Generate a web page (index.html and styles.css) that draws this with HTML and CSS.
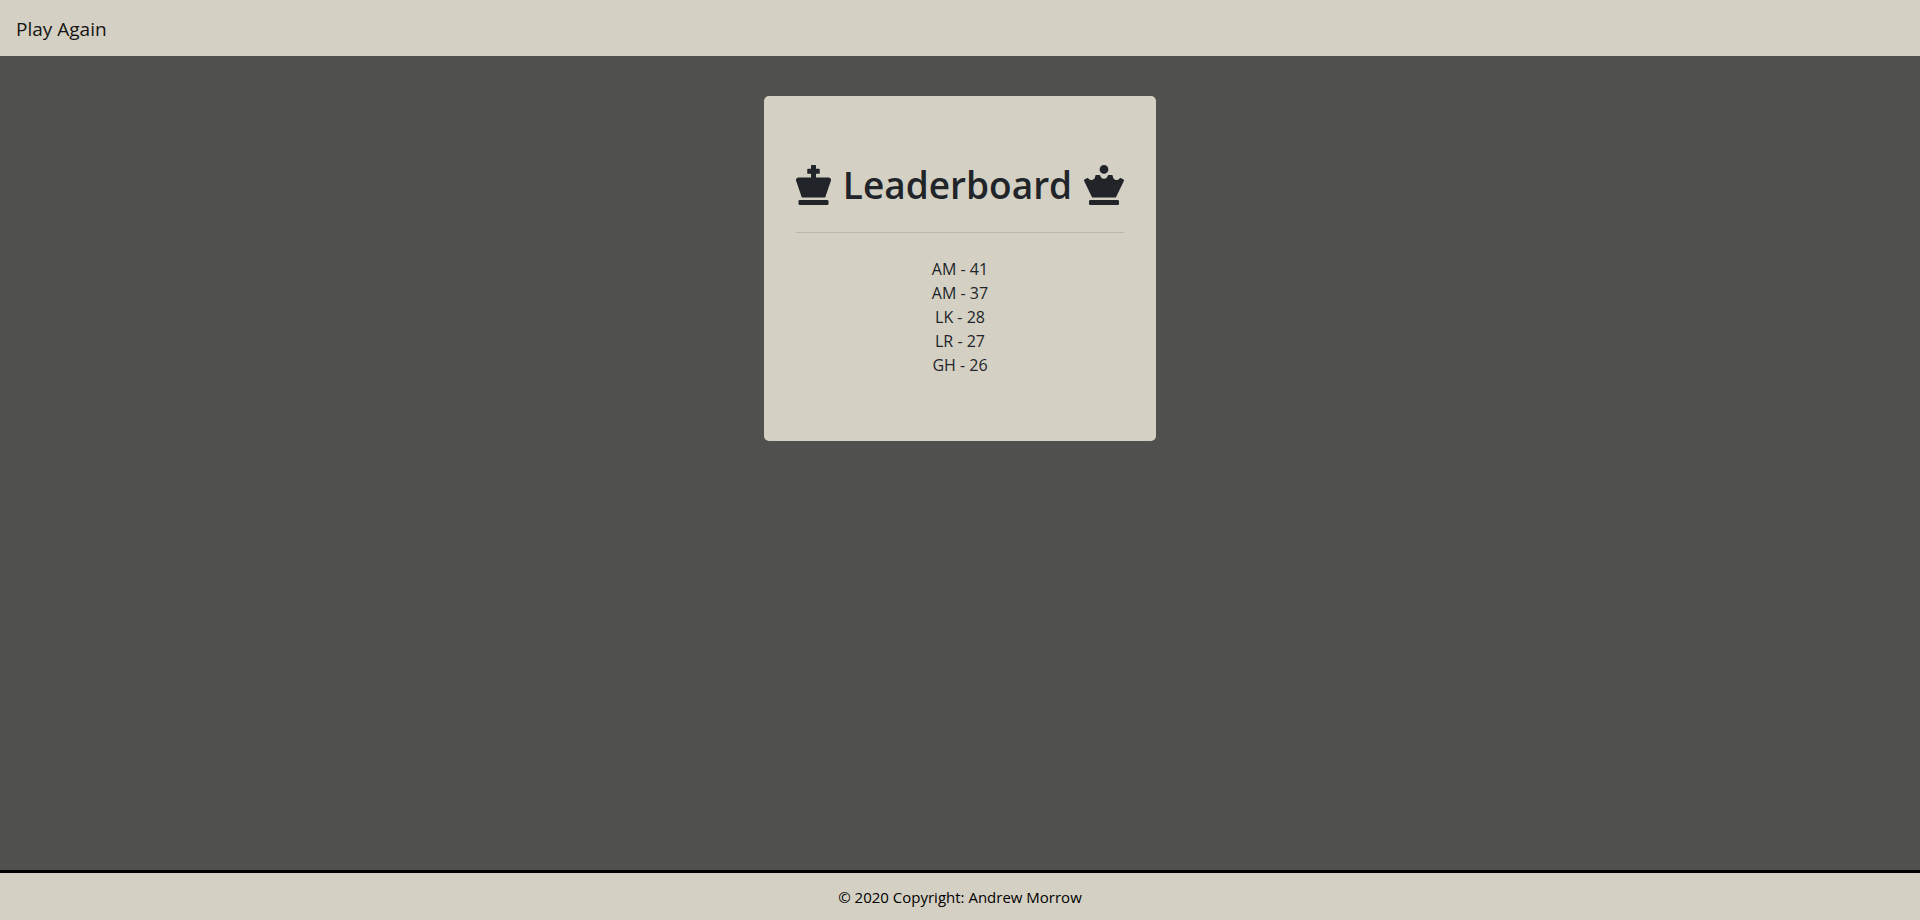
FILE: index.html
```
<!DOCTYPE html>
<html lang="en">
<head>
<meta charset="utf-8">
<meta name="viewport" content="width=device-width, initial-scale=1">
<title>Leaderboard</title>
<link rel="stylesheet" href="styles.css">
</head>
<body>
<nav class="navbar"><a class="navbar-brand" href="#">Play Again</a></nav>
<main class="content">
  <section class="card">
    <h1 class="title">
      <svg class="icon" viewBox="0 0 448 512" aria-hidden="true"><path d="M400 448H48a16 16 0 0 0-16 16v32a16 16 0 0 0 16 16h352a16 16 0 0 0 16-16v-32a16 16 0 0 0-16-16zm16-288H256v-48h40a8 8 0 0 0 8-8V56a8 8 0 0 0-8-8h-40V8a8 8 0 0 0-8-8h-48a8 8 0 0 0-8 8v40h-40a8 8 0 0 0-8 8v48a8 8 0 0 0 8 8h40v48H32a32 32 0 0 0-30.52 41.54L74.56 416h298.88l73.08-214.46A32 32 0 0 0 416 160z"/></svg>
      <span class="title-text">Leaderboard</span>
      <svg class="icon" viewBox="0 0 512 512" aria-hidden="true"><path d="M256 112a56 56 0 1 0-56-56 56 56 0 0 0 56 56zm176 336H80a16 16 0 0 0-16 16v32a16 16 0 0 0 16 16h352a16 16 0 0 0 16-16v-32a16 16 0 0 0-16-16zm72.87-263.84l-28.51-15.92c-7.44-5-16.91-2.46-22.29 4.68a47.59 47.59 0 0 1-47.23 18.23C383.7 186.86 368 164.93 368 141.4a13.4 13.4 0 0 0-13.4-13.4h-38.77c-6 0-11.61 4-12.86 9.91a48 48 0 0 1-93.94 0c-1.23-5.92-6.82-9.91-12.86-9.91H157.4a13.4 13.4 0 0 0-13.4 13.4c0 25.69-19 48.75-44.67 50.49a47.5 47.5 0 0 1-41.54-19.15c-5.28-7.09-14.73-9.45-22.09-4.54l-28.57 16a16 16 0 0 0-5.44 20.47L104.24 416h303.52l102.55-211.37a16 16 0 0 0-5.44-20.47z"/></svg>
    </h1>
    <hr class="divider">
    <ul class="scores">
      <li>AM - 41</li>
      <li>AM - 37</li>
      <li>LK - 28</li>
      <li>LR - 27</li>
      <li>GH - 26</li>
    </ul>
  </section>
</main>
<footer class="footer">© 2020 Copyright: Andrew Morrow</footer>
</body>
</html>
```
FILE: styles.css
```
*, *::before, *::after { box-sizing: border-box; }

body {
  display: flex;
  flex-direction: column;
  min-height: 100vh;
  margin: 0;
  background: #50504e;
  color: #212529;
  font-family: "Segoe UI", "Open Sans", "Noto Sans", sans-serif;
  font-size: 16px;
  line-height: 24px;
}

.navbar {
  padding: 14px 16px 12px;
  background: #d4d0c3;
}

.navbar-brand {
  display: block;
  width: max-content;
  color: #151514;
  font-size: 19px;
  line-height: 30px;
  text-decoration: none;
}

.content {
  display: flex;
  flex: 1;
  align-items: flex-start;
  justify-content: center;
  padding: 40px 16px;
}

.card {
  padding: 64px 32px;
  border-radius: 5px;
  background: #d4d0c3;
}

.title {
  display: flex;
  align-items: center;
  gap: 12px;
  margin: 0;
  font-size: 37px;
  font-weight: 600;
  line-height: 50px;
}

.icon {
  height: 40px;
  fill: currentColor;
}

.divider {
  margin: 22px 0 24px;
  border: 0;
  border-top: 1px solid #bab8ac;
}

.scores {
  margin: 0;
  padding: 0;
  list-style: none;
  text-align: center;
}

.footer {
  padding: 12px 16px 11px;
  border-top: 3px solid #000;
  background: #d4d0c3;
  color: #000;
  font-size: 15px;
  text-align: center;
}
```
